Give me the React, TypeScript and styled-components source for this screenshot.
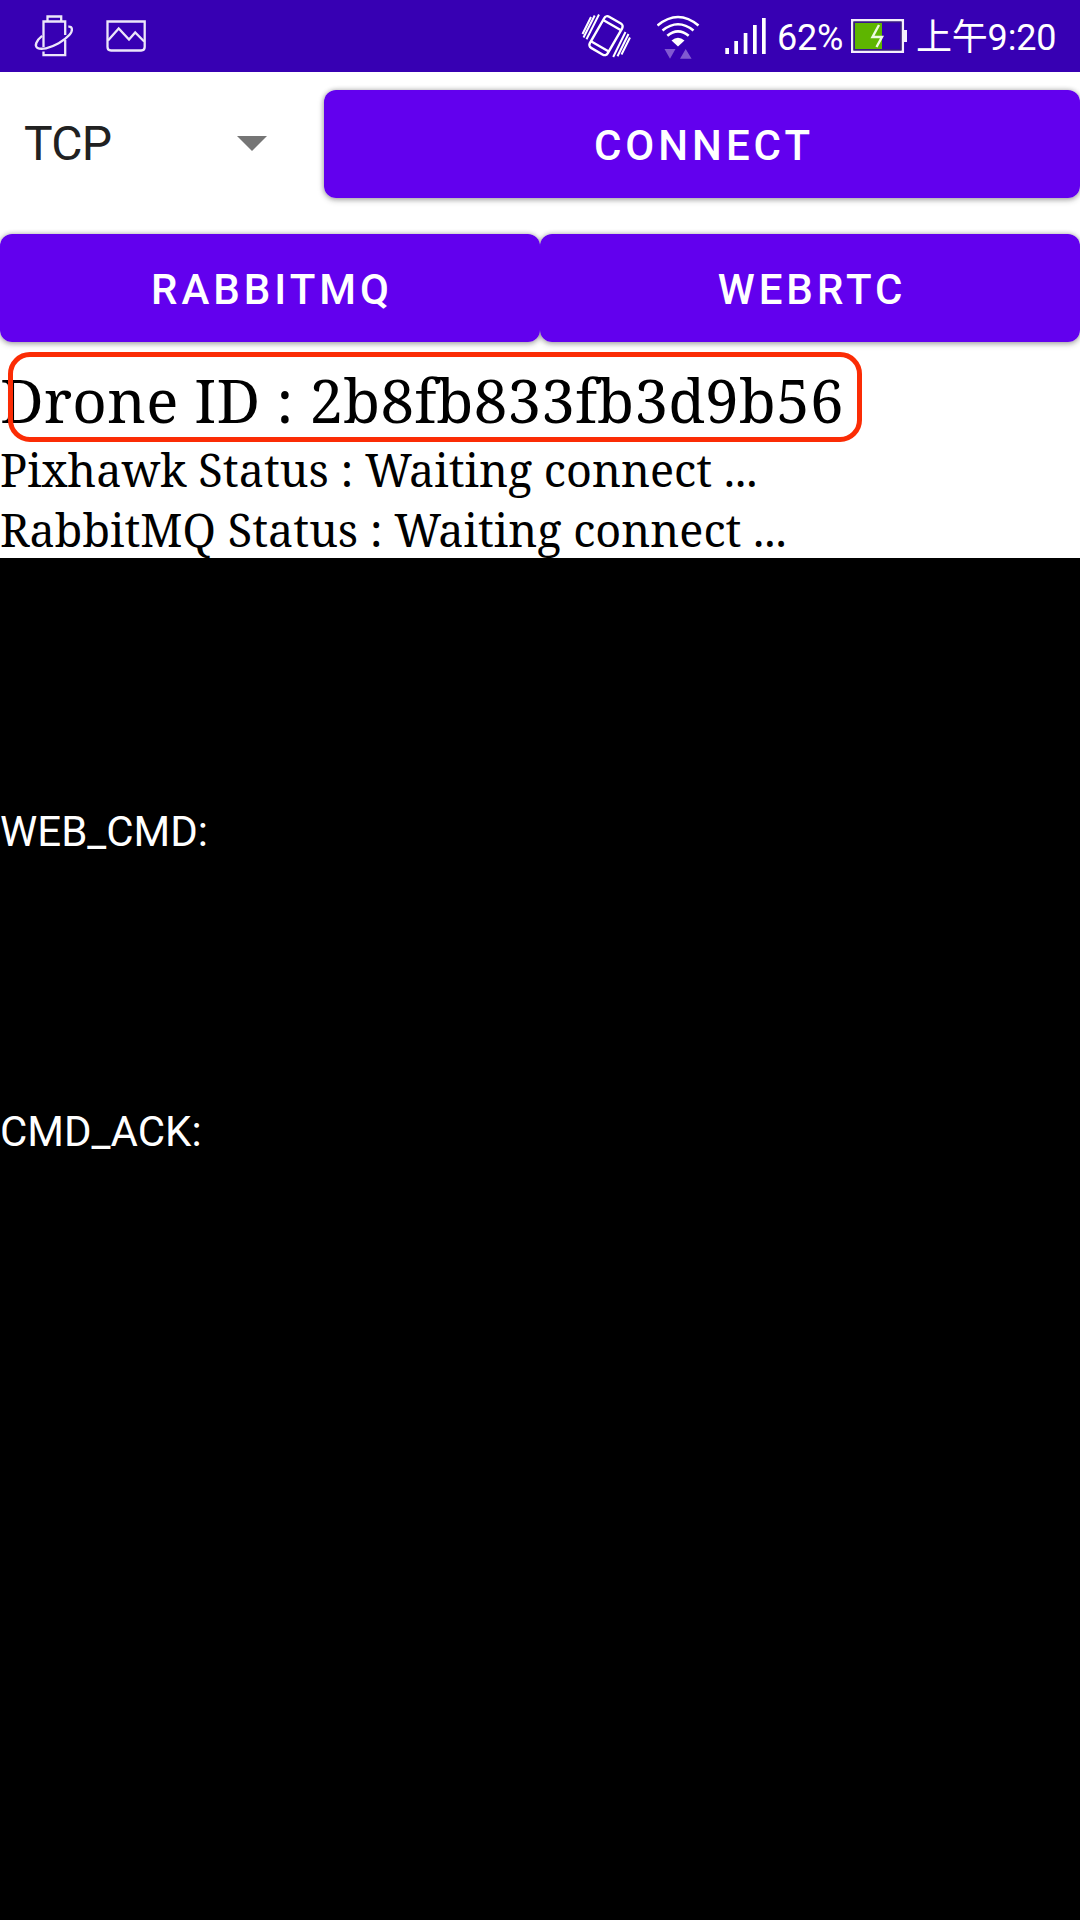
import React from "react";
import styled, { createGlobalStyle } from "styled-components";

const GlobalStyle = createGlobalStyle`
  *, *::before, *::after { box-sizing: border-box; }
  html, body { margin: 0; padding: 0; background: #000; }
  body { font-family: Roboto, "Noto Sans CJK TC", sans-serif; }
`;

const Screen = styled.div`
  width: 1080px;
  height: 1920px;
  display: flex;
  flex-direction: column;
  overflow: hidden;
  background: #000;
`;

const StatusBar = styled.header`
  flex: none;
  height: 72px;
  display: flex;
  align-items: center;
  justify-content: space-between;
  padding: 0 25px 0 30px;
  background: #3700b3;
  color: #fff;
`;

const StatusGroup = styled.div`
  display: flex;
  align-items: center;
  height: 72px;
`;

const Glyph = styled.svg<{ $gap?: number }>`
  flex: none;
  display: block;
  margin-right: ${(p) => p.$gap ?? 0}px;
`;

const StatusText = styled.span<{ $width: number }>`
  width: ${(p) => p.$width}px;
  font-size: 36px;
  line-height: 42px;
  padding-top: 4px;
  letter-spacing: -0.2px;
  white-space: nowrap;
`;

const Controls = styled.section`
  flex: none;
  background: #fff;
`;

const ButtonRow = styled.div<{ $columns: string }>`
  display: grid;
  grid-template-columns: ${(p) => p.$columns};
  height: 144px;
  align-items: center;
  isolation: isolate;
`;

const Spinner = styled.div`
  display: flex;
  align-items: center;
  justify-content: space-between;
  padding: 0 57px 0 24px;
  color: #212121;
  font-size: 48px;
  letter-spacing: -0.7px;
  line-height: 56px;
`;

const Button = styled.button`
  position: relative;
  height: 108px;
  margin: 0;
  padding: 3px 0 0 4px;
  border: 0;
  border-radius: 12px;
  background: #6200ee;
  color: #fff;
  font-family: Roboto, sans-serif;
  font-size: 42px;
  font-weight: 500;
  letter-spacing: 4px;
  line-height: 50px;

  &::before {
    content: "";
    position: absolute;
    inset: 0;
    z-index: -1;
    border-radius: 12px;
    box-shadow: 0 2px 6px rgba(0, 0, 0, 0.28), 0 0 5px rgba(0, 0, 0, 0.24);
  }
`;

const Info = styled.div`
  height: 198px;
  position: relative;
  color: #000;
  font-family: "Noto Serif", "DejaVu Serif Condensed", "DejaVu Serif", serif;
`;

const InfoLine = styled.div<{ $size: number; $height: number; $spacing?: number }>`
  height: ${(p) => p.$height}px;
  font-size: ${(p) => p.$size}px;
  line-height: ${(p) => p.$height}px;
  letter-spacing: ${(p) => p.$spacing ?? 0}px;
  white-space: nowrap;
`;

const Highlight = styled.div`
  position: absolute;
  left: 8px;
  top: -8px;
  width: 854px;
  height: 90px;
  border: 5px solid #fb2c05;
  border-radius: 22px;
`;

const Console = styled.main`
  flex: 1;
  display: flex;
  flex-direction: column;
  padding-top: 249px;
  background: #000;
  color: #fff;
`;

const LogArea = styled.div`
  height: 300px;
  font-size: 42px;
  line-height: 49px;
`;

const BatterySaverIcon = () => (
  <Glyph $gap={26} width="50" height="72" viewBox="30 0 50 72" fill="none" stroke="#ece6fa" strokeWidth="2.3">
    <path d="M47.5 21V16.5h13.7V21M43.5 47V21.5h21.7v13.500M65.2 40V55.200H43.500v-3.600" />
    <path d="M68.3 26.700c4.500-.3 4.800 4 1 8.400C64 41 54 46.700 46 48.300c-8 1.500-11.300-.8-9.700-5.300.8-2.400 3-5 5.800-7.200" />
  </Glyph>
);

const PictureIcon = () => (
  <Glyph width="42" height="72" viewBox="106 0 42 72" fill="none" stroke="#ece6fa" strokeWidth="2.3">
    <path d="M107.500 21.500h37.200v25.500q0 3.500-3.500 3.500h-30.200q-3.500 0-3.500-3.500z" />
    <path d="M108 40.500l10.700-12 10.300 11 6.200-7 9 9" />
  </Glyph>
);

const VibrateIcon = () => (
  <Glyph $gap={26} width="50" height="72" viewBox="581 0 50 72" fill="none" stroke="#fff" strokeWidth="2.4">
    <g transform="rotate(30 606 35.700)">
      <rect x="595.700" y="17.700" width="20.600" height="36" rx="3.500" />
      <path d="M595.700 23.500h20.600M595.700 48h20.600" />
    </g>
    <path
      strokeWidth="2"
      d="M599 14.500L586.500 39.300M594.700 15.500L583.500 37.500M591 17L582.500 34M613.200 57L625.500 32M617.500 56.200L628.500 34M621.500 54.500L630 37.500"
    />
  </Glyph>
);

const WifiIcon = () => (
  <Glyph $gap={25} width="43" height="72" viewBox="657 0 43 72" fill="none" stroke="#fff" strokeWidth="2.600">
    <path d="M657.500 25.500q20.500-17 41 0M662.500 30.500q15.500-12.500 31 0M667.300 35.700q10.700-8.700 21.400 0" />
    <path d="M671.500 40.500q6.500-5.500 13 0L678 46.500z" fill="#fff" stroke="none" />
    <path d="M664.500 49h11l-5.500 9.700zM680 58.700h11.600L685.700 49z" fill="#8159d1" stroke="none" />
  </Glyph>
);

const SignalIcon = () => (
  <Glyph $gap={10} width="42" height="72" viewBox="725 0 42 72" fill="#fff">
    <path d="M725.300 48h3.700v6h-3.700zM734.300 41h3.700v13h-3.700zM743.700 33h3.700v21h-3.700zM753 25h3.700v29H753zM762 18h3.700v36H762z" />
  </Glyph>
);

const BatteryIcon = () => (
  <Glyph $gap={9} width="56" height="72" viewBox="851 0 56 72" fill="none">
    <path d="M852.200 20.200h50.600v31.600h-50.600z" stroke="#f4effc" strokeWidth="2.500" />
    <path d="M854 22h47v28h-47z" stroke="#3b2868" strokeWidth="1.200" />
    <path d="M855 23h27v26h-27z" fill="#5eb500" />
    <path d="M903 30h4v12h-4z" fill="#f4effc" />
    <path d="M879 25l-6.500 12h9.500l-5.500 10" stroke="#edfae0" strokeWidth="2.400" />
  </Glyph>
);

const DropArrow = () => (
  <Glyph width="30" height="16" viewBox="0 0 30 16">
    <path d="M0 0h30L15 15z" fill="#757575" />
  </Glyph>
);

export default function App() {
  return (
    <Screen>
      <GlobalStyle />
      <StatusBar>
        <StatusGroup>
          <BatterySaverIcon />
          <PictureIcon />
        </StatusGroup>
        <StatusGroup>
          <VibrateIcon />
          <WifiIcon />
          <SignalIcon />
          <StatusText $width={74}>62%</StatusText>
          <BatteryIcon />
          <StatusText $width={139}>上午9:20</StatusText>
        </StatusGroup>
      </StatusBar>
      <Controls>
        <ButtonRow $columns="324px 1fr">
          <Spinner>
            <span>TCP</span>
            <DropArrow />
          </Spinner>
          <Button>CONNECT</Button>
        </ButtonRow>
        <ButtonRow $columns="1fr 1fr">
          <Button>RABBITMQ</Button>
          <Button>WEBRTC</Button>
        </ButtonRow>
        <Info>
          <InfoLine $size={60} $height={80} $spacing={0.24}>Drone ID : 2b8fb833fb3d9b56</InfoLine>
          <InfoLine $size={45} $height={59}>Pixhawk Status : Waiting connect ...</InfoLine>
          <InfoLine $size={45} $height={61}>RabbitMQ Status : Waiting connect ...</InfoLine>
          <Highlight />
        </Info>
      </Controls>
      <Console>
        <LogArea>WEB_CMD:</LogArea>
        <LogArea>CMD_ACK:</LogArea>
      </Console>
    </Screen>
  );
}
